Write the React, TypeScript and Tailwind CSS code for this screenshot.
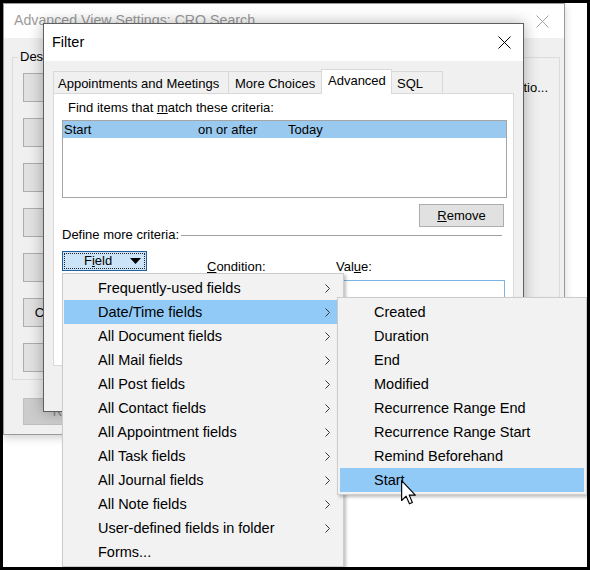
import React from 'react';

// Outlook "Filter" dialog with the Field menu open

const fieldGroups = [
  'Frequently-used fields',
  'Date/Time fields',
  'All Document fields',
  'All Mail fields',
  'All Post fields',
  'All Contact fields',
  'All Appointment fields',
  'All Task fields',
  'All Journal fields',
  'All Note fields',
  'User-defined fields in folder',
  'Forms...',
];

const dateFields = [
  'Created',
  'Duration',
  'End',
  'Modified',
  'Recurrence Range End',
  'Recurrence Range Start',
  'Remind Beforehand',
  'Start',
];

// only the one label that peeks out from behind the Filter window is written
const viewButtons = ['', '', '', '', '', 'Conditional Formatting...', ''];

function CloseIcon({ className = '' }: { className?: string }) {
  return (
    <svg width="13" height="13" viewBox="0 0 13 13" className={className}>
      <path d="M0.5 0.5 L12.5 12.5 M12.5 0.5 L0.5 12.5" stroke="currentColor" strokeWidth="1" fill="none" />
    </svg>
  );
}

function Chevron() {
  return (
    <svg width="5" height="9" viewBox="0 0 5 9" className="shrink-0">
      <path d="M0.5 0.5 L4.5 4.5 L0.5 8.5" stroke="#333" strokeWidth="1" fill="none" />
    </svg>
  );
}

function Cursor() {
  return (
    <svg width="16" height="25" viewBox="0 0 12.5 19.5" className="absolute left-[398px] top-[477px] z-40">
      <path
        d="M0.5 0.5 L0.5 16 L4 12.6 L6.6 18.6 L8.9 17.6 L6.4 11.8 L11.2 11.8 Z"
        fill="#ffffff"
        stroke="#000000"
        strokeWidth="0.9"
        strokeLinejoin="round"
      />
    </svg>
  );
}

function BackgroundWindow() {
  return (
    <div className="absolute left-0 top-0 w-[562px] h-[432px] border border-[#9a9a9a] bg-[#f0f0f0] shadow-[0_3px_8px_rgba(0,0,0,0.18)] flex flex-col">
      <div className="h-[34px] shrink-0 bg-white flex items-center justify-between pl-[10px] pr-[15px]">
        <span className="text-[14.2px] text-[#9b9b9b]">Advanced View Settings: CRO Search</span>
        <CloseIcon className="text-[#a3a3a3]" />
      </div>
      <div className="flex-1 pl-[8px] pr-[4px] pt-[11px]">
        <fieldset className="border border-[#dcdcdc]">
          <legend className="ml-[5px] px-[2px] text-[13px] leading-[16px]">Des</legend>
          <div className="flex flex-col gap-[16px] pt-[8px] pl-[10px] pb-[7px]">
            {viewButtons.map((label, i) => (
              <div key={i} className="flex items-center">
                <div className="w-[165px] h-[29px] shrink-0 bg-[#e1e1e1] border border-[#adadad] text-[13px] flex items-center justify-center whitespace-nowrap">
                  {label}
                </div>
                <div className="flex-1 text-right pr-[11px] text-[13px] whitespace-nowrap overflow-hidden">
                  {i === 0 ? 'Duratio...' : ''}
                </div>
              </div>
            ))}
          </div>
        </fieldset>
        <div className="mt-[18px] ml-[11px] w-[172px] h-[27px] bg-[#cccccc] border border-[#bfbfbf] text-[13px] text-[#838383] flex items-center justify-center">
          Reset Current View
        </div>
      </div>
    </div>
  );
}

function FilterWindow() {
  return (
    <div className="absolute left-[40px] top-[20px] w-[481px] h-[389px] z-10 border border-[#5f5f5f] bg-[#f0f0f0] shadow-[0_0_14px_rgba(0,0,0,0.3)] flex flex-col">
      <div className="h-[37px] shrink-0 bg-white flex items-center justify-between pl-[8px] pr-[12px]">
        <span className="text-[14.5px]">Filter</span>
        <CloseIcon className="text-black" />
      </div>
      <div className="pl-[9px] pr-[8px] pt-[8px]">
        {/* tabs */}
        <div className="h-[24px] flex items-end text-[13px]">
          <div className="w-[175px] h-[22px] border-l border-t border-[#d9d9d9] pl-[4px] pt-[2px] flex items-center">
            Appointments and Meetings
          </div>
          <div className="w-[93px] h-[22px] border-l border-t border-[#d9d9d9] pl-[6px] pt-[2px] flex items-center">
            More Choices
          </div>
          <div className="relative z-10 w-[71px] h-[25px] -mb-px bg-white border-l border-t border-r border-[#d9d9d9] pl-[6px] pt-[3px] leading-[16px]">
            Advanced
          </div>
          <div className="w-[51px] h-[22px] border-t border-r border-[#d9d9d9] pl-[5px] pt-[2px] flex items-center">
            SQL
          </div>
        </div>

        {/* panel */}
        <div className="w-[461px] h-[273px] border border-[#d9d9d9] bg-white flex flex-col text-[13px]">
          <div className="mt-[5px] ml-[14px] leading-[18px]">
            Find items that <span className="underline">m</span>atch these criteria:
          </div>
          <div className="mt-[3px] ml-[8px] w-[445px] h-[78px] border border-[#a5a5a5] bg-white">
            <div className="h-[17px] bg-[#99c9ef] flex items-center pl-[1px] pt-px leading-[16px]">
              <span className="w-[134px]">Start</span>
              <span className="w-[90px]">on or after</span>
              <span>Today</span>
            </div>
          </div>
          <div className="mt-[6px] mr-[9px] self-end w-[85px] h-[23px] bg-[#e1e1e1] border border-[#adadad] flex items-center justify-center">
            <span><span className="underline">R</span>emove</span>
          </div>
          <div className="h-[16px] ml-[8px] mr-[11px] flex items-center">
            <span className="leading-[16px] whitespace-nowrap">Define more criteria:</span>
            <div className="flex-1 ml-[2px] border-t border-[#a0a0a0]" />
          </div>
          <div className="mt-[8px] ml-[8px] flex items-start">
            <div className="w-[85px] h-[20px] shrink-0 bg-[#cce4f7] border border-[#1f5f9e] p-px">
              <div className="w-full h-full border border-dotted border-[#222] flex items-center pl-[19px] pr-[3px]">
                <span className="flex-1">F<span className="underline">i</span>eld</span>
                <svg width="11" height="6" viewBox="0 0 11 6">
                  <path d="M0 0 L11 0 L5.5 6 Z" fill="#000" />
                </svg>
              </div>
            </div>
            <div className="ml-[60px] mt-[8px] w-[129px] leading-[16px]">
              <span className="underline">C</span>ondition:
            </div>
            <div className="mt-[8px] flex flex-col">
              <div className="leading-[16px]">
                Val<span className="underline">u</span>e:
              </div>
              <div className="mt-[5px] ml-[7px] w-[162px] h-[24px] border border-[#7eb4ea] bg-white" />
            </div>
          </div>
        </div>
      </div>
    </div>
  );
}

function FieldMenu() {
  return (
    <div className="absolute left-[59px] top-[270px] w-[282px] z-20 border border-[#cccccc] bg-[#f2f2f2] py-[2px] shadow-[2px_2px_3px_rgba(0,0,0,0.25)]">
      {fieldGroups.map((label, i) => (
        <div
          key={label}
          className={`mx-px h-[24px] flex items-center pl-[34px] pr-[12px] text-[14.5px] ${
            i === 1 ? 'bg-[#91c9f7]' : ''
          }`}
        >
          <span className="flex-1 whitespace-nowrap pt-[2px]">{label}</span>
          {i < fieldGroups.length - 1 && <Chevron />}
        </div>
      ))}
    </div>
  );
}

function DateMenu() {
  return (
    <div className="absolute left-[334px] top-[294px] w-[250px] z-30 border border-[#cccccc] bg-[#f2f2f2] py-[2px] shadow-[2px_2px_3px_rgba(0,0,0,0.25)]">
      {dateFields.map((label, i) => (
        <div
          key={label}
          className={`mx-[2px] h-[24px] flex items-center pl-[34px] pt-[2px] text-[14.5px] whitespace-nowrap ${
            i === dateFields.length - 1 ? 'bg-[#91c9f7]' : ''
          }`}
        >
          {label}
        </div>
      ))}
    </div>
  );
}

export default function App() {
  return (
    <div className="w-[590px] h-[570px] bg-black p-[3px] font-['Liberation_Sans',Arial,sans-serif] text-black">
      <div className="relative w-full h-full bg-white overflow-hidden">
        <BackgroundWindow />
        <FilterWindow />
        <FieldMenu />
        <DateMenu />
        <Cursor />
      </div>
    </div>
  );
}
